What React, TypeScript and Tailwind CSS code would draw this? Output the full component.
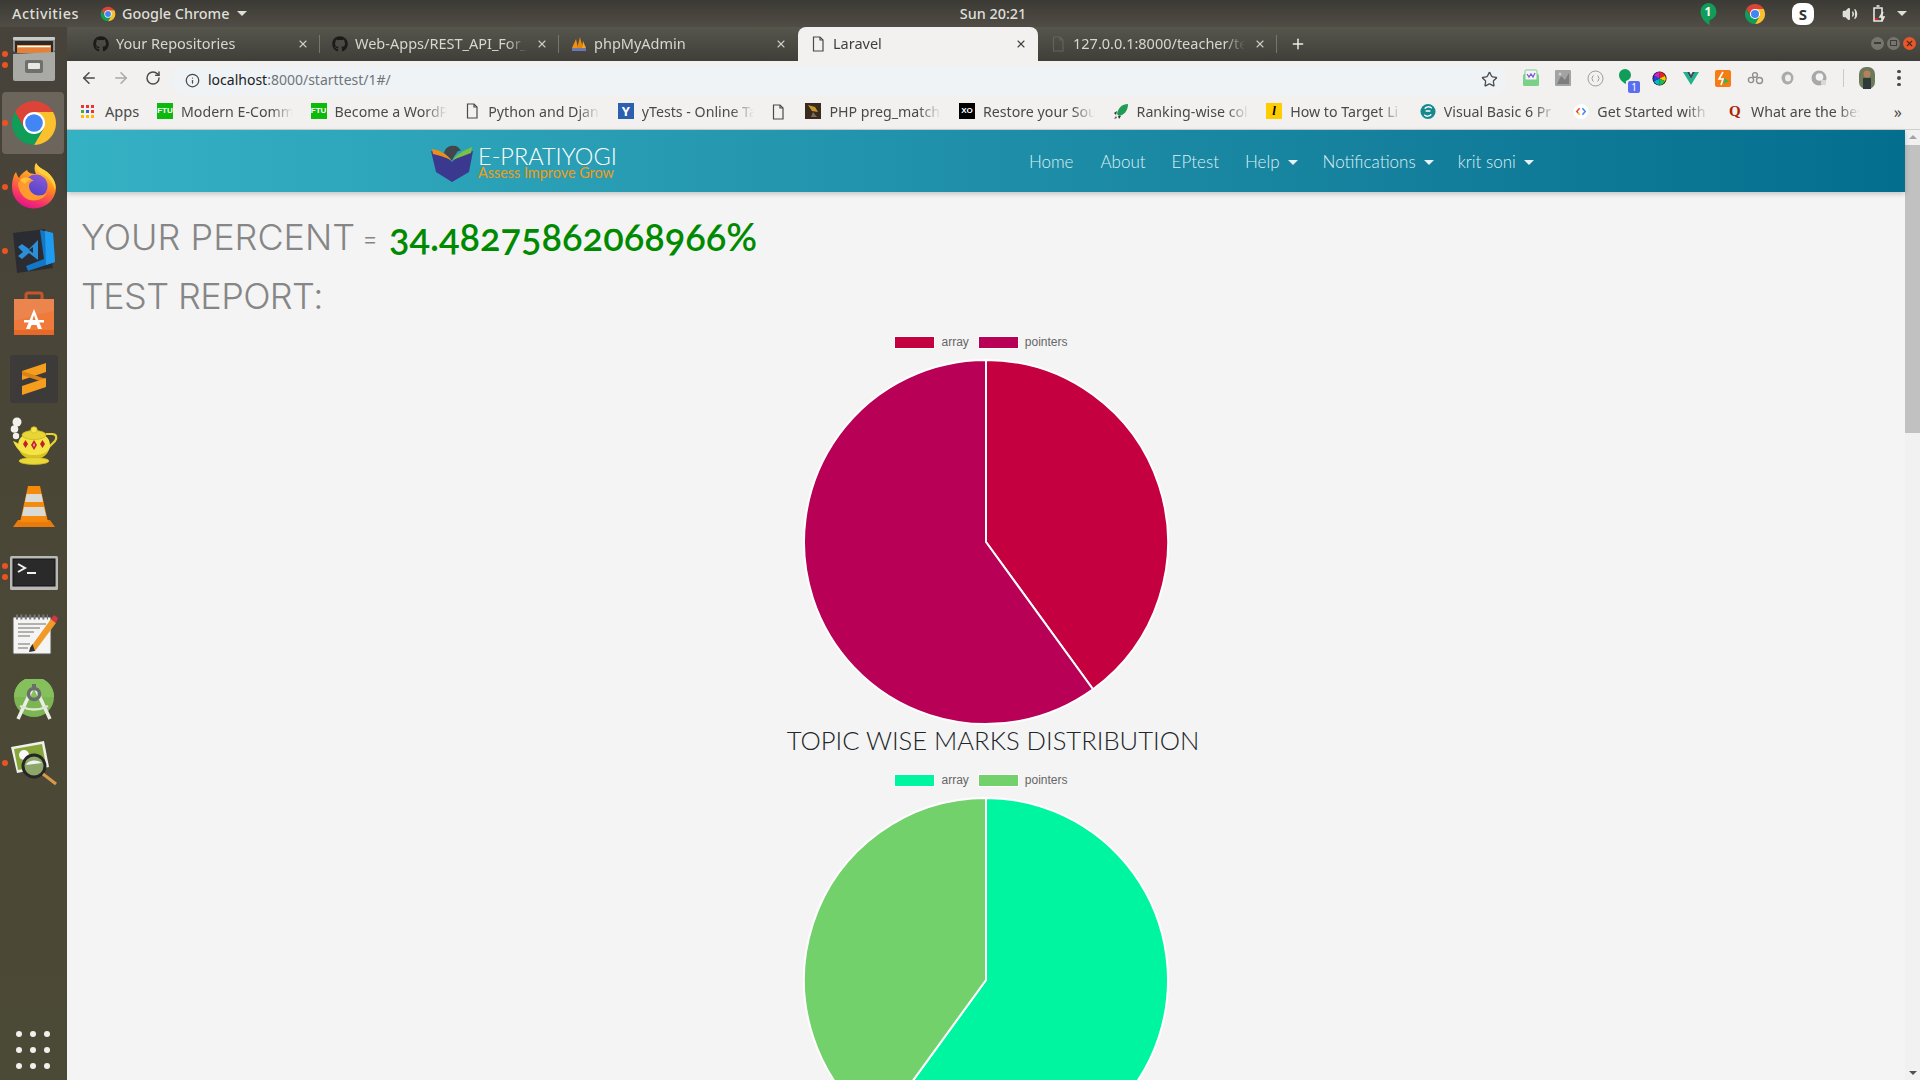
import React from "react";
import { ArrowLeft, ArrowRight, RotateCw, Info, Star, Plus, X, Volume2 } from "lucide-react";
import { FaGithub } from "react-icons/fa";

const Chrome = ({ s = 48 }: { s?: number }) => (
  <svg width={s} height={s} viewBox="0 0 48 48">
    <path fill="#db4437" d="M43.05 13A22 22 0 0 0 4.95 13L14.47 29.5L24 13Z" />
    <path fill="#fbc02d" transform="rotate(120 24 24)" d="M43.05 13A22 22 0 0 0 4.95 13L14.47 29.5L24 13Z" />
    <path fill="#0f9d58" transform="rotate(240 24 24)" d="M43.05 13A22 22 0 0 0 4.95 13L14.47 29.5L24 13Z" />
    <circle cx="24" cy="24" r="11" fill="#fff" />
    <circle cx="24" cy="24" r="8.8" fill="#4285f4" />
  </svg>
);

const Files = () => (
  <svg width="48" height="48" viewBox="0 0 48 48">
    <rect x="3" y="2" width="42" height="15" rx="2" fill="#8f8f8c" />
    <rect x="3" y="2" width="42" height="3" rx="1" fill="#c9c9c6" />
    <rect x="5" y="6" width="38" height="11" fill="#2c2a28" />
    <rect x="7" y="10" width="34" height="3" fill="#f5a15a" />
    <rect x="7" y="13" width="34" height="5" fill="#e5803a" />
    <rect x="8" y="11" width="32" height="1" fill="#fff" />
    <path d="M3 19L45 17V44a2 2 0 0 1-2 2H5a2 2 0 0 1-2-2Z" fill="#a9a9a6" />
    <rect x="15" y="25" width="18" height="13" rx="2" fill="#6f6f6c" />
    <rect x="18" y="28" width="12" height="6" rx="1" fill="#e8e8e6" />
  </svg>
);

const Firefox = () => (
  <svg width="46" height="46" viewBox="0 0 46 46" className="-mt-[2px]">
    <defs>
      <linearGradient id="ff" x1="0.75" y1="0" x2="0.35" y2="1">
        <stop offset="0" stopColor="#ffe24a" />
        <stop offset="0.45" stopColor="#ff8a1f" />
        <stop offset="0.8" stopColor="#f6336a" />
        <stop offset="1" stopColor="#e3128a" />
      </linearGradient>
      <linearGradient id="fg" x1="0.7" y1="0" x2="0.3" y2="1">
        <stop offset="0" stopColor="#8a5ad0" />
        <stop offset="1" stopColor="#4a3fd0" />
      </linearGradient>
    </defs>
    <path fill="url(#ff)" d="M1 24C1 17 3 11 5 9C6 12 7 14 8 15C10 11 13 9 16 7C17 10 21 11 25 11C23 7 23 3 25 0C28 6 36 7 40 13C44 18 45 22 45 25A22 21 0 0 1 1 24Z" />
    <path fill="#ffcf3a" d="M25 0C28 6 36 7 40 13C44 18 45 22 44 27C42 20 38 14 31 11C27 9 24 5 25 0Z" />
    <circle cx="25" cy="23" r="11.5" fill="url(#fg)" />
    <path fill="#ff9a2e" d="M7 20C11 15 19 14 23 18C20 18 18 20 18 23C18 30 26 36 36 30C32 38 20 40 13 34C9 30 7 25 7 20Z" />
    <path fill="#ffc23a" d="M9 17C12 14 17 14 20 16C17 17 15 19 14 21C12 19 10 18 9 17Z" />
  </svg>
);

const VSCode = () => (
  <svg width="46" height="46" viewBox="0 0 46 46">
    <path fill="#2b2c31" d="M2 5L34 1L42 40L6 45Z" />
    <path fill="#1377c5" d="M29 2L42 5L44 34L17 43L15 38L33 31Z" />
    <path fill="#1f9cf0" d="M34 3L42 5L44 34L35 37Z" />
    <path fill="#2b8ed8" d="M7 19L11 16L18 21L27 12V32L18 25L11 31L7 28L12 24Z" />
    <path fill="#2b2c31" d="M22 19V25L18 22Z" />
  </svg>
);

const Software = () => (
  <svg width="44" height="46" viewBox="0 0 44 46" className="-mt-[3px]">
    <path d="M14 9V4a2 2 0 0 1 2-2h12a2 2 0 0 1 2 2v5" fill="none" stroke="#c4562a" strokeWidth="3" />
    <path d="M2 8H42V44H2Z" fill="#ef7a3a" />
    <path d="M2 8H42V20L2 30Z" fill="#e88b5a" opacity="0.6" />
    <rect x="2" y="39" width="40" height="5" fill="#e56a2a" />
    <path d="M22 18L30 38H26L24.5 34H19.5L18 38H14ZM20.5 29H23.5L22 24Z" fill="#fff" />
    <rect x="12" y="29" width="20" height="2.5" fill="#fff" />
  </svg>
);

const Sublime = () => (
  <svg width="48" height="48" viewBox="0 0 48 48">
    <rect width="48" height="48" rx="3" fill="#3c3b39" />
    <path fill="#f59d1d" d="M36 8V17L12 25V16Z" />
    <path fill="#d9821a" d="M12 20L36 28V24L12 16Z" />
    <path fill="#f59d1d" d="M36 23V32L12 40V31Z" />
  </svg>
);

const Teapot = () => (
  <svg width="48" height="48" viewBox="0 0 48 48" className="-mt-[4px]">
    <circle cx="7" cy="5" r="4.5" fill="#f2f2ea" />
    <circle cx="4.5" cy="12" r="3.8" fill="#f2f2ea" />
    <circle cx="6" cy="19" r="3.2" fill="#f2f2ea" />
    <path d="M36 17H42C47 17 47 21 45 24L37 32" fill="none" stroke="#e6d230" strokeWidth="2.2" />
    <path d="M3 24C7 25 9 28 12 29V36C8 33 5 29 3 24Z" fill="#f0df3e" />
    <ellipse cx="24" cy="28" rx="16" ry="13" fill="#f5e445" />
    <path d="M9 32C14 40 34 40 39 32C37 41 28 42 24 42C20 42 11 41 9 32Z" fill="#d9c322" />
    <ellipse cx="24" cy="18" rx="12" ry="4.5" fill="#e8d536" stroke="#cdb81e" strokeWidth="0.8" />
    <circle cx="24" cy="13" r="3.2" fill="#f5e445" stroke="#d2bd22" strokeWidth="0.8" />
    <path d="M13 27L15.5 23L18 27L15.5 31ZM21 28L24 23L27 28L24 33ZM30 27L32.5 23L35 27L32.5 31Z" fill="#c51f2a" />
    <path d="M23 28L24 26L25 28L24 30Z" fill="#fff" opacity="0.7" />
    <ellipse cx="24" cy="44" rx="15" ry="3.4" fill="#ead83a" stroke="#cdb81e" strokeWidth="0.8" />
  </svg>
);

const VLC = () => (
  <svg width="46" height="46" viewBox="0 0 46 46">
    <path d="M2 43L7 36H39L44 43Z" fill="#e87b0b" />
    <path d="M17 2H29L37 38H9Z" fill="#f58a0c" />
    <path d="M15.5 10H30.5L32 18H14Z" fill="#d9d9d6" />
    <path d="M13 23H33L35 32H11Z" fill="#d9d9d6" />
  </svg>
);

const Terminal = () => (
  <svg width="48" height="34" viewBox="0 0 48 34" className="mt-[3px]">
    <rect width="48" height="34" rx="1.5" fill="#b8b8b6" />
    <rect x="3" y="3" width="42" height="27" fill="#2a2a2a" stroke="#111" />
    <path d="M8 8L15 12L8 16" fill="none" stroke="#f2f2f2" strokeWidth="2" />
    <rect x="17" y="16" width="9" height="2" fill="#f2f2f2" />
  </svg>
);

const Notepad = () => (
  <svg width="48" height="46" viewBox="0 0 48 46" className="-mt-[2px]">
    <rect x="3" y="6" width="38" height="37" rx="1" fill="#f4f4f2" stroke="#555" />
    <path d="M6 6h32" stroke="#777" strokeWidth="5" strokeDasharray="2 2.4" />
    <path d="M8 13H36M8 17H30M8 21H24M8 25H20M8 33H20M8 37H18" stroke="#9a9a9a" strokeWidth="1.5" />
    <path d="M20 37L41 8L46 12L25 40Z" fill="#f09a2a" />
    <path d="M20 37L22.5 33L25 40L19 41Z" fill="#333" />
    <path d="M41 8L44 4L48 7L46 12Z" fill="#d8344a" />
  </svg>
);

const Android = () => (
  <svg width="44" height="44" viewBox="0 0 44 44" className="mt-[4px]">
    <circle cx="22" cy="18" r="20" fill="#7cb653" />
    <path d="M2 18a20 20 0 0 1 40 0Z" fill="#86c05c" />
    <path d="M20 10L6 40M24 10L38 40" stroke="#eaeee4" strokeWidth="3.5" />
    <path d="M8 27Q22 34 36 27" stroke="#dfe6d6" strokeWidth="2.5" fill="none" />
    <circle cx="22" cy="15" r="5.5" fill="none" stroke="#6a6e6a" strokeWidth="3.5" />
    <rect x="20" y="5" width="4" height="5" fill="#6a6e6a" />
  </svg>
);

const Viewer = () => (
  <svg width="48" height="46" viewBox="0 0 48 46">
    <path d="M1 7L34 1L39 27L7 33Z" fill="#f0f0ec" />
    <path d="M4 9L32 4L36 25L8 30Z" fill="#86a63a" />
    <circle cx="14" cy="15" r="5" fill="#fafafa" />
    <circle cx="24" cy="26" r="11" fill="#8da66a" stroke="#262626" strokeWidth="3" />
    <path d="M16 25a9 6 0 0 1 16-2Z" fill="#f2f2ee" />
    <path d="M33 34L46 44" stroke="#d69a4a" strokeWidth="3" />
  </svg>
);

const Doc = ({ c = "#4a4a4a" }: { c?: string }) => (
  <svg width="14" height="16" viewBox="0 0 14 16" fill="none" stroke={c} strokeWidth="1.2">
    <path d="M2.5 1H9L12 4V15H2.5Z" />
    <path d="M9 1V4H12" />
  </svg>
);

const PMA = () => (
  <svg width="16" height="16" viewBox="0 0 16 16">
    <path d="M1 12L5 3L7 12Z" fill="#f29111" />
    <path d="M6 12L9 1L12 12Z" fill="#e8860c" />
    <path d="M11 12L12 5L15 12Z" fill="#f5a623" />
    <rect x="1" y="12" width="14" height="3" fill="#6c78af" />
  </svg>
);

const Dock = () => {
  const items: [React.ReactNode, number][] = [
    [<Files />, 2],
    [<Chrome s={48} />, 1],
    [<Firefox />, 1],
    [<VSCode />, 1],
    [<Software />, 0],
    [<Sublime />, 0],
    [<Teapot />, 0],
    [<VLC />, 0],
    [<Terminal />, 2],
    [<Notepad />, 0],
    [<Android />, 0],
    [<Viewer />, 1],
  ];
  return (
    <div className="w-[67px] shrink-0 flex flex-col bg-gradient-to-b from-[#47423a] via-[#4b4736] to-[#4b4a36]">
      {items.map(([icon, n], i) => (
        <div key={i} className="relative h-16 flex items-center justify-center">
          {i === 1 && <div className="absolute left-[2px] top-[1px] w-[62px] h-[62px] rounded-[4px] bg-[#6b655c]" />}
          <div className="relative flex items-center justify-center">{icon}</div>
          {n > 0 && (
            <div className="absolute left-[2px] top-0 bottom-0 flex flex-col justify-center gap-[5px]">
              {Array.from({ length: n }).map((_, k) => (
                <span key={k} className="block w-[6px] h-[6px] rounded-full bg-[#e95420]" />
              ))}
            </div>
          )}
        </div>
      ))}
      <div className="mt-auto mb-[11px] grid grid-cols-[repeat(3,6px)] gap-x-[8px] gap-y-[10px] pl-[16px]">
        {Array.from({ length: 9 }).map((_, i) => (
          <span key={i} className="block w-[6px] h-[6px] rounded-full bg-[#f0f0ec]" />
        ))}
      </div>
    </div>
  );
};

const TopBar = () => (
  <div className="h-[27px] shrink-0 flex items-center bg-gradient-to-b from-[#3c3a34] to-[#4f4d45] text-[14.4px] font-medium text-[#dfdfd8] relative font-['Noto_Sans',sans-serif]">
    <span className="ml-3 w-[88px] tracking-[0.5px]">Activities</span>
    <Chrome s={16} />
    <span className="ml-[6px]">Google Chrome</span>
    <span className="ml-[7px] w-0 h-0 border-x-[5px] border-x-transparent border-t-[5px] border-t-[#dfdfd8]" />
    <span className="absolute left-[956px] w-[74px] text-center">Sun 20:21</span>
    <div className="ml-auto flex items-center pr-[13px]">
      <svg width="18" height="24" viewBox="0 0 18 24" className="mr-[27px]">
        <path d="M9 1a8.5 8.5 0 0 1 8.5 8.5c0 4.5-3 7.5-7 8.5v5c-4-2-9-7-9-13.5a8.5 8.5 0 0 1 7.5-8.5Z" fill="#0f9d58" />
        <text x="9" y="14" fontSize="12" fontWeight="700" textAnchor="middle" fill="#fff" fontFamily="Noto Sans">1</text>
      </svg>
      <span className="mr-[25px] flex"><Chrome s={22} /></span>
      <svg width="24" height="24" viewBox="0 0 24 24" className="mr-[27px]">
        <rect x="1" y="1" width="22" height="22" rx="8" fill="#fff" />
        <text x="12" y="17.5" fontSize="15" fontWeight="700" textAnchor="middle" fill="#333" fontFamily="Noto Sans">S</text>
      </svg>
      <Volume2 size={16} className="text-[#dfdfd8] mr-[14px]" fill="#dfdfd8" />
      <svg width="14" height="18" viewBox="0 0 14 18" className="mr-[11px]" fill="none" stroke="#e8e8e4" strokeWidth="1.6">
        <path d="M2 3H10V16H2Z" />
        <path d="M4.5 1H7.5" />
        <rect x="3" y="13" width="3" height="2" fill="#d22" stroke="none" />
        <path d="M11 7L8 12H12L10 16" />
      </svg>
      <span className="w-0 h-0 border-x-[5px] border-x-transparent border-t-[5px] border-t-[#dfdfd8]" />
    </div>
  </div>
);

const tabs = [
  { t: "Your Repositories", i: <FaGithub size={16} className="text-[#1b1b1b]" /> },
  { t: "Web-Apps/REST_API_For_", i: <FaGithub size={16} className="text-[#1b1b1b]" /> },
  { t: "phpMyAdmin", i: <PMA /> },
  { t: "Laravel", i: <Doc />, active: true },
  { t: "127.0.0.1:8000/teacher/te", i: <Doc c="#63625b" /> },
];

const TabStrip = () => (
  <div className="h-[34px] shrink-0 flex items-stretch pl-[14px] bg-gradient-to-b from-[#57564d] to-[#3f3e38] font-['Noto_Sans',sans-serif] text-[14.5px]">
    {tabs.map((t, i) => (
      <div
        key={i}
        className={
          t.active
            ? "w-[240px] relative flex items-center pl-[12px] pb-[1px] bg-[#f2f1f0] text-[#3f3f3f] rounded-t-[8px]"
            : "w-[239px] relative flex items-center pl-[12px] pb-[1px] text-[#d8d6d0]"
        }
      >
        <span className="w-[16px] flex justify-center">{t.i}</span>
        <span className="ml-[7px] w-[172px] overflow-hidden whitespace-nowrap [mask-image:linear-gradient(to_right,black_88%,transparent)]">
          {t.t}
        </span>
        <X size={12} strokeWidth={2.2} className={t.active ? "ml-auto mr-[11px] text-[#3f3f3f]" : "ml-auto mr-[11px] text-[#cfcdc7]"} />
        {!t.active && i !== 2 && <span className="absolute right-0 top-[8px] h-[18px] w-px bg-[#77766d]" />}
      </div>
    ))}
    <div className="flex items-center ml-[13px] pb-[1px] text-[#eeeeea]">
      <Plus size={16} strokeWidth={2.2} />
    </div>
    <div className="ml-auto flex items-center gap-[3px] pr-[4px] pb-[2px]">
      <span className="w-[13px] h-[13px] rounded-full bg-[#76756d] flex items-center justify-center"><span className="w-[7px] h-[1.5px] bg-[#3d3c36]" /></span>
      <span className="w-[13px] h-[13px] rounded-full bg-[#76756d] flex items-center justify-center"><span className="w-[7px] h-[6px] border border-[#3d3c36]" /></span>
      <span className="w-[13px] h-[13px] rounded-full bg-[#e8562a] flex items-center justify-center"><X size={9} strokeWidth={3} className="text-[#4a2a1a]" /></span>
    </div>
  </div>
);

const Ext = ({ children }: { children: React.ReactNode }) => (
  <div className="w-8 h-full flex items-center justify-center relative">{children}</div>
);

const Toolbar = () => (
  <div className="h-[34px] shrink-0 flex items-center pl-[6px] bg-[#f2f1f0] font-['Noto_Sans',sans-serif]">
    <div className="w-8 flex justify-center"><ArrowLeft size={18} strokeWidth={2} className="text-[#4a4a4a]" /></div>
    <div className="w-8 flex justify-center"><ArrowRight size={18} strokeWidth={2} className="text-[#a8a8a8]" /></div>
    <div className="w-8 flex justify-center"><RotateCw size={16} strokeWidth={2.2} className="text-[#4a4a4a]" /></div>
    <div className="ml-[3px] w-[1335px] h-[29px] mt-[4px] rounded-[14px] bg-[#eff3f5] flex items-center pl-[13px] pr-[9px] text-[14px]">
      <Info size={15} className="text-[#4a4a4a]" />
      <span className="ml-[8px] -mt-[2px] text-[#202124]">localhost</span>
      <span className="-mt-[2px] text-[#70757a]">:8000/starttest/1#/</span>
      <Star size={17} strokeWidth={1.8} className="ml-auto -mt-[2px] text-[#4a4a4a]" />
    </div>
    <div className="ml-2 flex h-full items-center">
      <Ext>
        <svg width="18" height="18" viewBox="0 0 18 18"><rect x="1" y="5" width="16" height="12" rx="1.5" fill="#7bd08a" /><rect x="3" y="1" width="12" height="10" rx="1" fill="#f4f4f4" stroke="#7bd08a" /><path d="M5 5L7 8L9 5L11 8L13 4" stroke="#7b5bd6" fill="none" strokeWidth="1.3" /></svg>
      </Ext>
      <Ext>
        <svg width="16" height="16" viewBox="0 0 16 16"><rect width="16" height="16" rx="1" fill="#a3a3a3" /><path d="M2 14L6 6L10 10L14 3V14Z" fill="#7d7d7d" /><circle cx="5" cy="4" r="1.5" fill="#ccc" /></svg>
      </Ext>
      <Ext>
        <svg width="17" height="17" viewBox="0 0 17 17" fill="none" stroke="#9a9a9a"><circle cx="8.5" cy="8.5" r="7.5" /><path d="M6.5 5.5C5 6 6 8 4.8 8.5C6 9 5 11 6.5 11.5M10.5 5.5C12 6 11 8 12.2 8.5C11 9 12 11 10.5 11.5" /></svg>
      </Ext>
      <Ext>
        <svg width="14" height="16" viewBox="0 0 14 16" className="-mt-1 -ml-1"><path d="M7 1a6 6 0 0 1 6 6c0 3-2 5-5 6v3C4 14 1 11 1 7a6 6 0 0 1 6-6Z" fill="#0f9d58" /></svg>
        <span className="absolute right-[3px] bottom-[2px] w-[12px] h-[12px] rounded-[2px] bg-[#5b6ef0] text-white text-[10px] leading-[12px] text-center">1</span>
      </Ext>
      <Ext>
        <svg width="15" height="15" viewBox="0 0 16 16"><circle cx="8" cy="8" r="7.5" fill="#111" /><path d="M8 8L8 1A7 7 0 0 1 14 5Z" fill="#e22" /><path d="M8 8L14 5A7 7 0 0 1 14 11Z" fill="#fc0" /><path d="M8 8L14 11A7 7 0 0 1 8 15Z" fill="#2b4" /><path d="M8 8L8 15A7 7 0 0 1 2 11Z" fill="#0bc" /><path d="M8 8L2 11A7 7 0 0 1 2 5Z" fill="#24d" /><path d="M8 8L2 5A7 7 0 0 1 8 1Z" fill="#c2c" /></svg>
      </Ext>
      <Ext>
        <svg width="16" height="15" viewBox="0 0 16 15"><path d="M0 1H4L8 8L12 1H16L8 14Z" fill="#1fb58a" /><path d="M4 1H6.5L8 4L9.5 1H12L8 8Z" fill="#34495e" /></svg>
      </Ext>
      <Ext>
        <svg width="16" height="17" viewBox="0 0 16 17"><rect width="16" height="17" rx="2" fill="#f57c12" /><path d="M8 2L4 9H8L6 15" stroke="#fff" strokeWidth="1.6" fill="none" /><path d="M9 8L14 11L9 14Z" fill="#3db54a" /></svg>
      </Ext>
      <Ext>
        <svg width="17" height="14" viewBox="0 0 17 14" fill="none" stroke="#8e8e8e" strokeWidth="1.4"><circle cx="4" cy="9" r="2.6" /><circle cx="12.5" cy="9.5" r="3" /><circle cx="8" cy="4" r="2.4" /></svg>
      </Ext>
      <Ext>
        <svg width="13" height="14" viewBox="0 0 13 14"><ellipse cx="6.5" cy="7" rx="6" ry="6.5" fill="#aaa" /><ellipse cx="7" cy="7" rx="3" ry="3.6" fill="#efefef" /></svg>
      </Ext>
      <Ext>
        <svg width="16" height="16" viewBox="0 0 16 16"><circle cx="8" cy="8" r="7.5" fill="#a8a8a8" /><circle cx="8.5" cy="7" r="3.8" fill="#f3f3f3" /><rect x="10" y="10" width="5" height="5" rx="1" fill="#d8d8d8" /></svg>
      </Ext>
      <div className="w-4 flex justify-center"><span className="block w-px h-[18px] bg-[#c9c9c7]" /></div>
      <Ext>
        <svg width="16" height="22" viewBox="0 0 16 22"><rect width="16" height="22" rx="7" fill="#6d7a5a" /><circle cx="8" cy="7" r="3.5" fill="#b8805c" /><rect x="4" y="11" width="8" height="11" fill="#2f3a3a" /></svg>
      </Ext>
      <Ext>
        <span className="flex flex-col gap-[3px]">
          <span className="block w-[3.5px] h-[3.5px] rounded-full bg-[#4a4a4a]" />
          <span className="block w-[3.5px] h-[3.5px] rounded-full bg-[#4a4a4a]" />
          <span className="block w-[3.5px] h-[3.5px] rounded-full bg-[#4a4a4a]" />
        </span>
      </Ext>
    </div>
  </div>
);

const Ftu = () => <span className="block w-[16px] h-[16px] bg-[#0cb90c] text-white text-[8px] font-bold leading-[16px] text-center font-['Liberation_Sans',sans-serif]">FTU</span>;

const bookmarks: { t: string; i: React.ReactNode }[] = [
  { t: "Modern E-Comm", i: <Ftu /> },
  { t: "Become a WordP", i: <Ftu /> },
  { t: "Python and Djan", i: <Doc /> },
  { t: "yTests - Online Ta", i: <span className="block w-[16px] h-[16px] bg-[#2c5fb0] text-white text-[13px] font-bold leading-[16px] text-center">Y</span> },
];
const bookmarks2: { t: string; i: React.ReactNode }[] = [
  { t: "PHP preg_match", i: <svg width="16" height="16" viewBox="0 0 16 16"><rect width="16" height="16" fill="#3a2b20" /><path d="M3 2L10 4L13 9L7 8Z" fill="#c8962e" /><path d="M8 9L12 14H6Z" fill="#7a6a58" /></svg> },
  { t: "Restore your Sou", i: <span className="block w-[16px] h-[16px] bg-black text-white text-[8px] font-bold leading-[16px] text-center font-['Liberation_Sans',sans-serif]">XO</span> },
  { t: "Ranking-wise col", i: <svg width="16" height="17" viewBox="0 0 16 17"><path d="M15 1C9 1 5 5 4 11L6 13C11 12 15 8 15 1Z" fill="#1f9d55" /><path d="M4 8L1 10L3 12ZM8 13L6 16L5 13Z" fill="#333" /><path d="M3 13L1 16L4 15Z" fill="#555" /></svg> },
  { t: "How to Target Li", i: <span className="block w-[16px] h-[16px] bg-[#ffcc00] text-black text-[13px] italic font-bold leading-[16px] text-center font-['Liberation_Serif',serif]">l</span> },
  { t: "Visual Basic 6 Pr", i: <svg width="17" height="17" viewBox="0 0 17 17"><circle cx="8.5" cy="8.5" r="8" fill="#16898f" /><path d="M5 5.5A5 5 0 0 1 12.5 5M12 11.5A5 5 0 0 1 4.5 12M6 8H11" stroke="#fff" strokeWidth="1.5" fill="none" /></svg> },
  { t: "Get Started with", i: <svg width="17" height="17" viewBox="0 0 17 17"><circle cx="8.5" cy="8.5" r="8" fill="#fff" /><path d="M7 5L4 8.5L5.5 10" stroke="#ea4335" strokeWidth="1.6" fill="none" /><path d="M5.5 10L7 12" stroke="#fbbc05" strokeWidth="1.6" /><path d="M10 5L13 8.5L10 12" stroke="#4285f4" strokeWidth="1.6" fill="none" /></svg> },
  { t: "What are the bes", i: <span className="block w-[16px] text-center text-[#a82400] text-[15px] font-bold leading-[16px] font-['Liberation_Serif',serif]">Q</span> },
];

const Bm = ({ t, i, last }: { t: string; i: React.ReactNode; last?: boolean }) => (
  <div className={last ? "w-[134px] pl-[1px] flex items-center shrink-0" : "w-[153.6px] pl-[1px] flex items-center shrink-0"}>
    <span className="w-[16px] flex justify-center">{i}</span>
    <span className="ml-[8px] w-[112px] overflow-hidden whitespace-nowrap [mask-image:linear-gradient(to_right,black_80%,transparent)]">{t}</span>
  </div>
);

const Bookmarks = () => (
  <div className="h-[35px] shrink-0 flex items-center pl-[14px] pb-[1px] bg-[#f2f1f0] border-b border-[#cfcfcd] text-[14.2px] text-[#4a4a4a] font-['Noto_Sans',sans-serif]">
    <div className="w-[75px] flex items-center shrink-0">
      <span className="grid grid-cols-3 gap-[2px] w-[13px]">
        {["#e33", "#e33", "#e33", "#4a4", "#36c", "#e33", "#fb0", "#fb0", "#fb0"].map((c, k) => (
          <span key={k} className="block w-[3px] h-[3px]" style={{ background: c }} />
        ))}
      </span>
      <span className="ml-[11px] text-[14.6px]">Apps</span>
    </div>
    {bookmarks.map((b, k) => <Bm key={k} {...b} />)}
    <div className="w-[34px] pl-px flex shrink-0"><Doc /></div>
    {bookmarks2.map((b, k) => <Bm key={k} {...b} last={k === bookmarks2.length - 1} />)}
    <span className="ml-auto mr-[18px] text-[16px] leading-none">»</span>
  </div>
);

const Caret = () => <span className="ml-[8px] w-0 h-0 border-x-[5px] border-x-transparent border-t-[5px] border-t-[#e6f2f5]" />;

const Logo = () => (
  <div className="flex items-center">
    <svg width="44" height="42" viewBox="0 0 44 42">
      <path d="M14 12a9 9 0 0 1 17-2c-2-1-4 0-5 3-2 2-3 4-4 7-2-3-5-5-8-8Z" fill="#43464c" />
      <path d="M1 10C9 12 17 15 22 21C27 15 35 12 43 10L39 31L22 41L6 31Z" fill="#3b388f" />
      <path d="M2 8C9 9 17 13 21 19C15 16 8 14 3 13Z" fill="#f08d17" />
      <path d="M42 6C35 9 27 13 23 19C29 16 36 14 41 12Z" fill="#7cc142" />
    </svg>
    <div className="ml-[4px] pt-[2px] flex flex-col font-['Lato',sans-serif]">
      <span className="text-[23.5px] leading-[20px] font-light text-white">E-PRATIYOGI</span>
      <span className="text-[14.4px] leading-[14px] font-normal text-[#f39c12]">Assess Improve Grow</span>
    </div>
  </div>
);

const Nav = () => (
  <div className="h-[62px] shrink-0 relative z-10 shadow-[0_2px_5px_rgba(0,0,0,0.2)] bg-gradient-to-r from-[#35b1c4] to-[#046e8e] flex items-center pl-[363px] pt-[2px] text-[17px] text-[#dff0f4] font-light font-['Lato',sans-serif]">
    <Logo />
    <span className="ml-[412px]">Home</span>
    <span className="ml-[27px]">About</span>
    <span className="ml-[26px]">EPtest</span>
    <span className="ml-[26px] flex items-center">Help<Caret /></span>
    <span className="ml-[25px] flex items-center">Notifications<Caret /></span>
    <span className="ml-[24px] flex items-center">krit soni<Caret /></span>
  </div>
);

const Pie = ({ a, b, deg }: { a: string; b: string; deg: number }) => {
  const r = 182;
  const c = 183;
  const rad = (deg * Math.PI) / 180;
  const x = c + r * Math.sin(rad);
  const y = c - r * Math.cos(rad);
  const large = deg > 180 ? 1 : 0;
  return (
    <svg width="366" height="366" viewBox="0 0 366 366" className="shrink-0">
      <path d={`M${c} ${c}L${c} ${c - r}A${r} ${r} 0 ${large} 1 ${x} ${y}Z`} fill={a} stroke="#fff" strokeWidth="2" />
      <path d={`M${c} ${c}L${x} ${y}A${r} ${r} 0 ${1 - large} 1 ${c} ${c - r}Z`} fill={b} stroke="#fff" strokeWidth="2" />
    </svg>
  );
};

const Legend = ({ a, b }: { a: string; b: string }) => (
  <div className="h-3 flex items-center pr-[10px] text-[12px] text-[#666] font-['Liberation_Sans',sans-serif]">
    <span className="w-[41px] h-[13px] border border-white" style={{ background: a }} />
    <span className="ml-[6px] mr-[9px]">array</span>
    <span className="w-[41px] h-[13px] border border-white" style={{ background: b }} />
    <span className="ml-[6px]">pointers</span>
  </div>
);

export default function App() {
  return (
    <div className="w-[1920px] h-[1080px] overflow-hidden flex flex-col">
      <TopBar />
      <div className="flex-1 min-h-0 flex">
        <Dock />
        <div className="flex-1 min-w-0 flex flex-col">
          <TabStrip />
          <Toolbar />
          <Bookmarks />
          <div className="flex-1 min-h-0 flex">
            <div className="flex-1 min-w-0 flex flex-col">
              <Nav />
              <div className="flex-1 min-h-0 overflow-hidden bg-[#f4f4f4] flex flex-col pt-[15px]">
                <div className="h-[59px] shrink-0 flex items-center pl-[14px] text-[36px] text-[#868686] font-light font-['Inter',sans-serif]">
                  <span>YOUR PERCENT</span>
                  <span className="ml-[7px] mt-1 text-[24px]">=</span>
                  <span className="ml-[11px] text-[38px] text-[#008a00] font-semibold font-['Lato',sans-serif] oldstyle-nums">34.48275862068966%</span>
                </div>
                <div className="h-[59px] shrink-0 flex items-center pl-[14px] text-[36px] tracking-[-0.6px] text-[#868686] font-light font-['Inter',sans-serif]">
                  TEST REPORT:
                </div>
                <div className="flex flex-col items-center">
                  <div className="mt-[11px]"><Legend a="#c40041" b="#b80056" /></div>
                  <div className="mt-[11px]"><Pie a="#c40041" b="#b80056" deg={144} /></div>
                  <div className="h-[34px] pl-[14px] pb-[3px] flex items-center text-[25.6px] font-light text-[#212529] font-['Lato',sans-serif] whitespace-nowrap">TOPIC WISE MARKS DISTRIBUTION</div>
                  <div className="mt-[15px]"><Legend a="#00f5a0" b="#72d16a" /></div>
                  <div className="mt-[11px]"><Pie a="#00f5a0" b="#72d16a" deg={216} /></div>
                </div>
              </div>
            </div>
            <div className="w-[15px] shrink-0 bg-[#f1f1f1] flex flex-col items-center">
              <span className="mt-[5px] w-0 h-0 border-x-[4px] border-x-transparent border-b-[4px] border-b-[#a3a3a3]" />
              <span className="mt-[6px] w-full h-[288px] bg-[#c1c1c1]" />
              <span className="mt-auto mb-[5px] w-0 h-0 border-x-[4px] border-x-transparent border-t-[4px] border-t-[#505050]" />
            </div>
          </div>
        </div>
      </div>
    </div>
  );
}
